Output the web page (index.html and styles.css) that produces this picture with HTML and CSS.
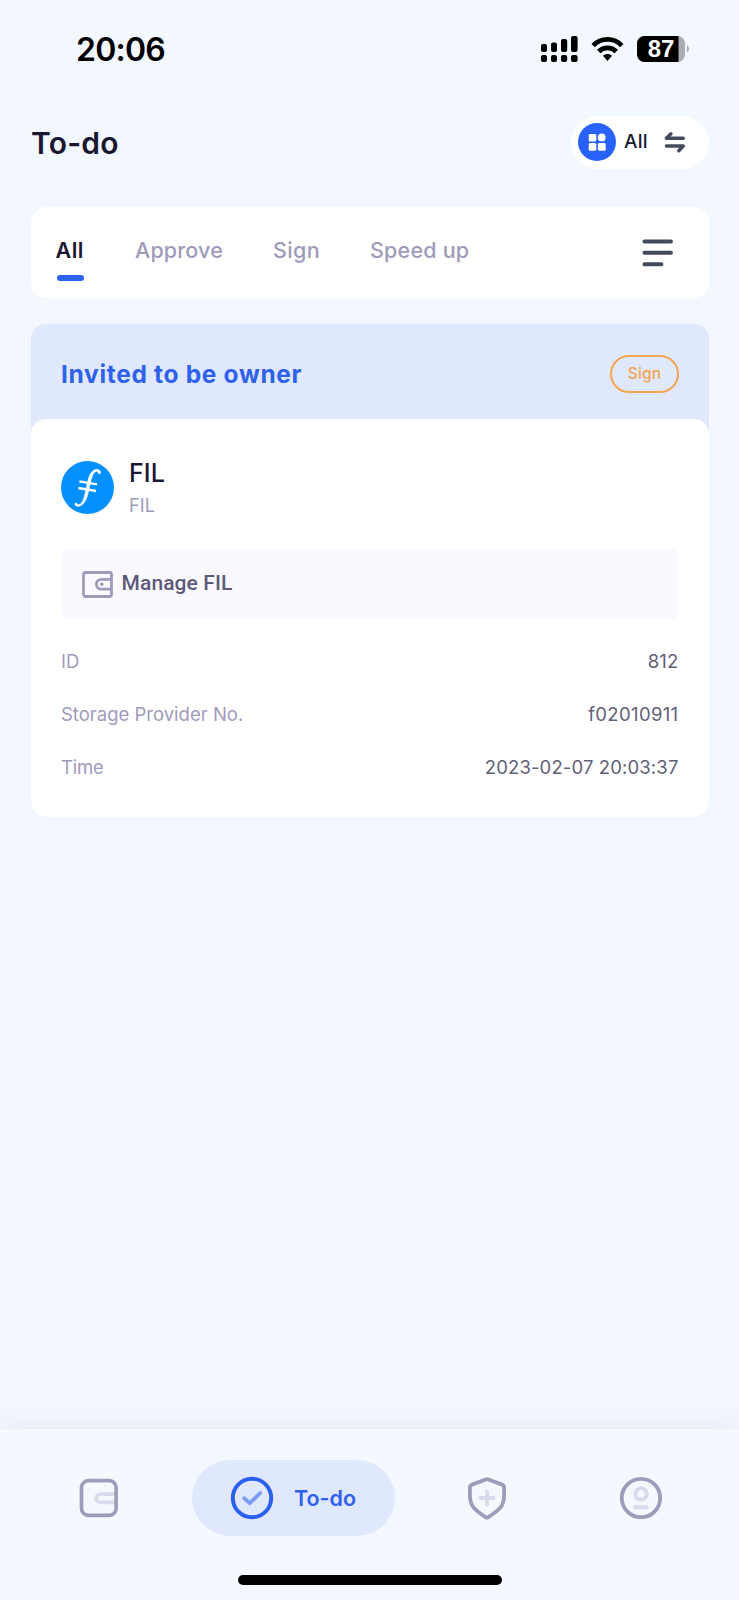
FILE: index.html
```html
<!DOCTYPE html>
<html lang="en">
<head>
<meta charset="utf-8">
<title>To-do</title>
<link rel="stylesheet" href="styles.css">
</head>
<body>
<div class="screen">
  <div class="status">
    <span class="clock">20:06</span>
    <svg class="status-icons" width="152" height="30" viewBox="0 0 152 30">
      <g>
        <rect x="1" y="9" width="6" height="8" rx="2"/><rect x="11" y="7.500" width="6" height="9.500" rx="2"/><rect x="21" y="4" width="6.200" height="13" rx="2"/><rect x="31" y="1" width="6.600" height="16" rx="2"/>
        <rect x="1" y="20" width="6" height="7" rx="2"/><rect x="11" y="20" width="6" height="7" rx="2"/><rect x="21" y="20" width="6.200" height="7" rx="2"/><rect x="31" y="20" width="6.600" height="7" rx="2"/>
      </g>
      <g fill="none" stroke="#000" stroke-width="4.800">
        <path d="M53.200 10.600C61 2.400 74 2.400 81.800 10.600"/>
        <path d="M58.700 16.500C63.600 11.600 71.400 11.600 76.300 16.500"/>
      </g>
      <path d="M63 20.800C65.500 18.400 69.500 18.400 72 20.800L67.500 26Z"/>
      <clipPath id="batt"><rect x="97" y="1" width="48" height="26" rx="7.500"/></clipPath>
      <g clip-path="url(#batt)"><rect x="97" y="1" width="48" height="26" fill="#a9acb1"/><rect x="97" y="1" width="41.500" height="26"/></g>
      <path d="M147 10.500C149.700 11.500 149.700 16.500 147 17.500Z" fill="#a9acb8"/>
      <text class="batt-text" x="121" y="22" text-anchor="middle">87</text>
    </svg>
  </div>

  <header class="header">
    <h1 class="title">To-do</h1>
    <div class="switcher">
      <svg width="38" height="38" viewBox="0 0 38 38"><circle cx="19" cy="19" r="19" fill="#2962fb"/><g fill="#fff"><rect x="10.700" y="11" width="7.600" height="7.600" rx="1.500"/><circle cx="23.700" cy="14.400" r="3.900"/><rect x="10.700" y="20" width="7.600" height="7.800" rx="1.500"/><rect x="19.900" y="20" width="7.800" height="7.800" rx="1.500"/></g></svg>
      <span class="switcher-label">All</span>
      <svg class="swap" width="22" height="22" viewBox="0 0 22 22" fill="none" stroke="#444b5c" stroke-width="3.400" stroke-linecap="round" stroke-linejoin="round"><path d="M19.300 7.300H2.400L6.900 2.700M2.400 15H19.300L14.800 19.700"/></svg>
    </div>
  </header>

  <nav class="tabs">
    <span class="tab active t-all">All</span>
    <span class="tab t-approve">Approve</span>
    <span class="tab t-sign">Sign</span>
    <span class="tab t-speed">Speed up</span>
    <svg class="menu" width="32" height="28" viewBox="0 0 32 28" fill="none" stroke="#414a5c" stroke-width="3.900" stroke-linecap="round"><path d="M2.400 2.500H29M2.400 13.700H29M2.400 25.300H19.500"/></svg>
  </nav>

  <article class="card">
    <div class="card-head">
      <h2 class="card-title">Invited to be owner</h2>
      <span class="badge">Sign</span>
    </div>
    <div class="card-body">
      <div class="token">
        <svg width="53" height="53" viewBox="0 0 53 53"><circle cx="26.500" cy="26.500" r="26.500" fill="#0590ff"/><path fill="#fff" stroke="#fff" stroke-width=".4" d="M39 12.800C39.800 12.300 40 11 39.200 9.900C37.500 7.500 33.500 8 30.900 10.800C27.300 14.700 26.600 21 25.200 27C23.800 33.500 22.600 39.500 20.200 42.300C18.700 44 16.800 43.900 15.800 42.300C15 41.700 13.800 42.300 13.800 43.300C14.400 46 18.300 46.200 21.300 43.700C26 39.800 27 33 28.500 26.500C29.800 20.800 30.800 14.800 33.200 11.800C34.800 9.900 36.700 10 37.300 11.900C37.700 12.900 38.300 13.200 39 12.800Z"/><path d="M18.400 20.300L36 23.300M17.400 27L35 30" fill="none" stroke="#fff" stroke-width="2.300"/></svg>
        <div class="token-text"><span class="token-name">FIL</span><span class="token-sub">FIL</span></div>
      </div>
      <div class="wallet">
        <svg width="31" height="27" viewBox="0 0 31 27" fill="none" stroke="#9f9bbb" stroke-width="2.800"><rect x="1.500" y="1.500" width="28" height="24" rx="2"/><path d="M29.500 8.400H19.300A4.900 4.900 0 0 0 19.300 18.200H29.500"/><circle cx="19.700" cy="13.300" r="1.800" fill="#9f9bbb" stroke="none"/></svg>
        <span class="wallet-name">Manage FIL</span>
      </div>
      <dl class="rows">
        <div class="row"><dt>ID</dt><dd class="v-id">812</dd></div>
        <div class="row"><dt>Storage Provider No.</dt><dd class="v-sp">f02010911</dd></div>
        <div class="row"><dt class="k-time">Time</dt><dd class="v-time">2023-02-07 20:03:37</dd></div>
      </dl>
    </div>
  </article>

  <footer class="bottom">
    <div class="bar">
      <svg class="nav-wallet" width="44" height="44" viewBox="0 0 44 44" fill="none" stroke-width="3.700"><path d="M38 18.100H23.300A4.150 4.150 0 0 0 23.300 26.400H38" stroke="#d9daeb"/><rect x="4.500" y="4.700" width="34.600" height="34.600" rx="6.800" stroke="#9f9bbb"/></svg>
      <div class="pill">
        <svg width="44" height="44" viewBox="0 0 44 44" fill="none"><circle cx="22" cy="22" r="19.200" stroke="#2b60ef" stroke-width="3.900"/><path d="M14.200 22.200L19.700 27.200L30.200 17" stroke="#7b9bf5" stroke-width="3.800" stroke-linecap="round" stroke-linejoin="round"/></svg>
        <span class="pill-label">To-do</span>
      </div>
      <svg class="nav-shield" width="44" height="44" viewBox="0 0 44 44" fill="none" stroke-linejoin="round"><path d="M21.300 3.300Q22 3 22.700 3.300L37.700 8.900Q39.100 9.500 39.100 11V18.500C39.100 29.500 36 32.800 23 41.300Q22 41.900 21 41.300C8 32.800 4.900 29.500 4.900 18.500V11Q4.900 9.500 6.300 8.900Z" stroke="#9f9bbb" stroke-width="3.800"/><path d="M22 15.500V28.500M15.500 22H28.500" stroke="#d9daeb" stroke-width="4" stroke-linecap="round"/></svg>
      <svg class="nav-user" width="44" height="44" viewBox="0 0 44 44" fill="none"><circle cx="22" cy="22" r="19.200" stroke="#9f9bbb" stroke-width="3.800"/><g stroke="#d9daeb" stroke-width="4"><circle cx="22" cy="17.900" r="5.600"/><path d="M16.200 31.200H27.600" stroke-linecap="round"/></g></svg>
    </div>
    <div class="home"></div>
  </footer>
</div>
</body>
</html>
```
FILE: styles.css
```css
* { box-sizing: border-box; }
body, h1, h2, dl, dt, dd { margin: 0; }
body { background: #f3f8ff; font-family: Inter, "Liberation Sans", sans-serif; color: #191830; }
svg { display: block; flex: none; }
span, h1, h2, dt, dd { white-space: nowrap; }
.screen { width: 739px; height: 1600px; display: flex; flex-direction: column; overflow: hidden; }

.status { height: 116px; padding: 35px 47px 0 76px; display: flex; justify-content: space-between; align-items: flex-start; }
.clock { font-size: 32px; line-height: 30px; font-weight: 600; letter-spacing: -.75px; color: #000; }
.batt-text { font: 700 22.500px "Liberation Sans", sans-serif; font-size: 24px; fill: #fff; }

.header { height: 53px; padding: 0 30px 0 31px; display: flex; justify-content: space-between; align-items: center; }
.title { font-size: 30px; line-height: 36px; font-weight: 600; letter-spacing: .2px; }
.switcher { width: 138px; height: 53px; border-radius: 27px; background: #fff; display: flex; align-items: center; padding-left: 7px; }
.switcher svg { margin-top: -1px; }
.switcher-label { width: 24px; margin: -2px 16px 0 8px; font-size: 19px; font-weight: 500; letter-spacing: .2px; }

.tabs { height: 91px; margin: 38px 30px 0 30.500px; border-radius: 15px; background: #fff; display: flex; padding: 30px 35px 0 25px; }
.tab { font-size: 21.500px; line-height: 26px; font-weight: 500; letter-spacing: .15px; color: #9f9bbb; }
.active { color: #191830; font-weight: 600; letter-spacing: .5px; }
.active::after { content: ""; display: block; width: 27px; height: 6px; margin: 12px 0 0 1px; border-radius: 3px; background: #2b62f3; }
.t-all { width: 79.500px; }
.t-approve { width: 138px; }
.t-sign { width: 97px; letter-spacing: .4px; }
.t-speed { letter-spacing: .2px; }
.menu { margin: 2px 0 0 auto; }

.card { margin: 26px 30px 0 30.500px; border-radius: 15px; background: #e0e8fd; overflow: hidden; }
.card-head { height: 95px; padding: 0 30px 0 30.500px; display: flex; align-items: center; justify-content: space-between; }
.card-title { font-size: 24.500px; line-height: 30px; font-weight: 700; letter-spacing: .68px; color: #2f62ec; padding-top: 5px; }
.badge { width: 69px; height: 38px; margin-top: 4px; border: 2px solid #f5a44f; border-radius: 20px; color: #f5a44f; font-size: 15.500px; line-height: 34px; font-weight: 500; letter-spacing: .2px; text-align: center; }
.card-body { height: 398px; background: #fff; border-radius: 15px; padding: 42px 30.500px 0 30.500px; }
.token { display: flex; align-items: center; gap: 15px; height: 53px; }
.token-text { display: flex; flex-direction: column; gap: 7px; margin-top: -1px; }
.token-name { font-size: 25px; line-height: 30px; font-weight: 450; letter-spacing: .1px; }
.token-sub { font-size: 18px; line-height: 22px; letter-spacing: .2px; color: #9f9bbb; }
.wallet { height: 72px; margin-top: 34px; border-radius: 7px; background: #faf9ff; display: flex; align-items: center; gap: 9px; padding-left: 20.500px; }
.wallet-name { font-family: Roboto, sans-serif; font-size: 21px; font-weight: 500; letter-spacing: .1px; margin-top: -2px; color: #5d5978; }
.rows { padding-top: 14px; }
.row { height: 53px; display: flex; justify-content: space-between; align-items: center; font-size: 18.500px; color: #9f9bbb; }
.row dd { color: #625f78; }
.k-time { letter-spacing: -.2px; }
.v-id { letter-spacing: .2px; }
.v-sp { letter-spacing: .35px; }
.v-time { letter-spacing: .13px; }

.bottom { margin-top: auto; height: 171px; background: #f4f9ff; box-shadow: 0 0 26px rgba(90, 90, 140, .13); }
.bar { height: 138px; padding: 31px 0 31px 77px; display: flex; align-items: center; }
.pill { width: 203px; height: 76px; margin-left: 70.500px; border-radius: 38px; background: #e0e8fd; display: flex; align-items: center; gap: 20px; padding-left: 38.500px; }
.pill-label { font-size: 21.500px; font-weight: 600; color: #2f62ec; }
.nav-shield { margin-left: 70.500px; }
.nav-user { margin-left: 109.500px; }
.home { width: 264px; height: 10px; margin: 8px 0 0 238px; border-radius: 5px; background: #000; }
```
